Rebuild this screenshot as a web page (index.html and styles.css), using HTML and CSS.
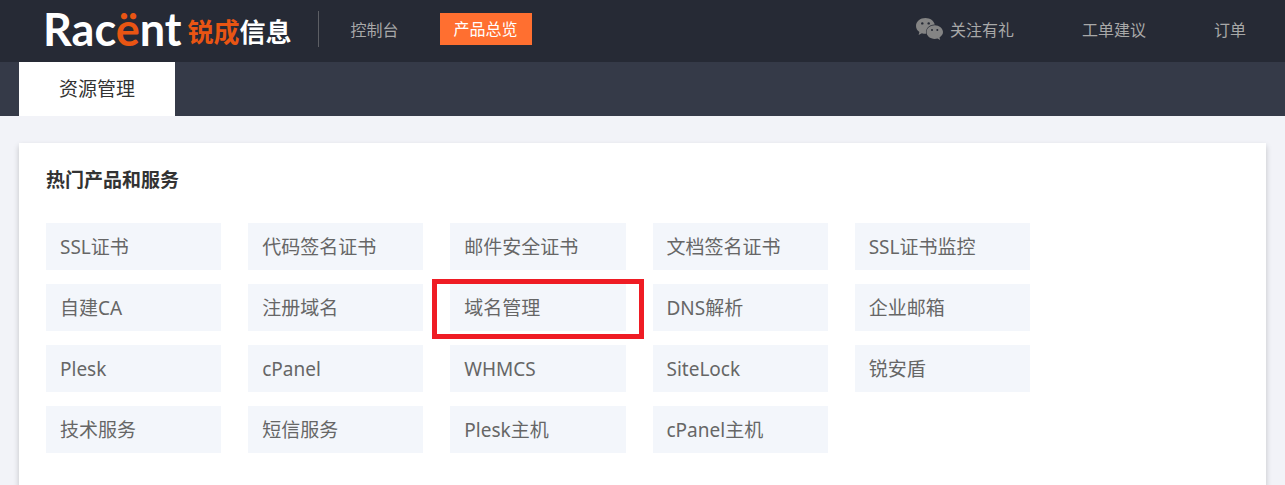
FILE: index.html
```html
<!DOCTYPE html>
<html lang="zh-CN">
<head>
    <meta charset="UTF-8">
    <meta name="viewport" content="width=device-width, initial-scale=1.0">
    <title>产品总览</title>
    <link rel="stylesheet" href="styles.css">
</head>
<body>
    <header class="header">
        <a class="logo" href="#">
            <span class="logo-name">Rac<span class="orange">ë</span>nt</span>
            <span class="logo-cn"><span class="orange">锐成</span>信息</span>
        </a>
        <nav class="nav">
            <a href="#">控制台</a>
            <a class="active" href="#">产品总览</a>
        </nav>
        <nav class="links">
            <a class="wechat" href="#">
                <svg width="27" height="22" viewBox="0 0 27 22" aria-hidden="true">
                    <path fill="#848484" d="M9.500 0C4.200 0 0 3.500 0 7.900c0 2.500 1.300 4.600 3.400 6.100L2.600 17l3.300-1.800c1.500.4 2.800.6 4.200.5C9.300 11 13 6.700 18.800 6.600 17.900 2.800 14.100 0 9.500 0z"/>
                    <path fill="#848484" d="M18.700 7.300c-4.600 0-8.200 3-8.200 6.800s3.600 6.900 8.200 6.900c1 0 1.900-.2 2.800-.5l2.700 1.500-.7-2.500c2-1.200 3.500-3.100 3.500-5.400 0-3.700-3.800-6.800-8.300-6.800z"/>
                    <g fill="#262a35">
                        <circle cx="6.300" cy="5.400" r="1.200"/>
                        <circle cx="12.700" cy="5.400" r="1.200"/>
                        <circle cx="16" cy="12" r="1"/>
                        <circle cx="21.300" cy="12" r="1"/>
                    </g>
                </svg>
                关注有礼
            </a>
            <a href="#">工单建议</a>
            <a href="#">订单</a>
        </nav>
    </header>
    <div class="tabs">
        <a class="tab" href="#">资源管理</a>
    </div>
    <main class="panel">
        <h2>热门产品和服务</h2>
        <div class="products">
            <a href="#">SSL证书</a>
            <a href="#">代码签名证书</a>
            <a href="#">邮件安全证书</a>
            <a href="#">文档签名证书</a>
            <a href="#">SSL证书监控</a>
            <a class="first" href="#">自建CA</a>
            <a href="#">注册域名</a>
            <a class="marked" href="#">域名管理</a>
            <a href="#">DNS解析</a>
            <a href="#">企业邮箱</a>
            <a class="first" href="#">Plesk</a>
            <a href="#">cPanel</a>
            <a href="#">WHMCS</a>
            <a href="#">SiteLock</a>
            <a href="#">锐安盾</a>
            <a class="first" href="#">技术服务</a>
            <a href="#">短信服务</a>
            <a href="#">Plesk主机</a>
            <a href="#">cPanel主机</a>
        </div>
    </main>
</body>
</html>
```

FILE: styles.css
```css
* {
    box-sizing: border-box;
}

body {
    margin: 0;
    min-height: 100vh;
    display: flex;
    flex-direction: column;
    font-family: "Noto Sans", "Noto Sans CJK SC", sans-serif;
    background-color: #f2f3f8;
}

a {
    color: inherit;
    text-decoration: none;
    white-space: nowrap;
}

.header {
    display: flex;
    align-items: center;
    height: 62px;
    padding: 0 39px 4px 43px;
    background-color: #262a35;
    color: #a8a8a8;
    font-size: 16px;
}

.logo {
    display: flex;
    align-items: flex-end;
    gap: 6px;
    height: 36px;
    padding-right: 26px;
    border-right: 1px solid #5c5e64;
    color: #fff;
    font-weight: bold;
}

.logo-name {
    font-family: Lato, sans-serif;
    font-size: 45px;
    line-height: 36px;
}

.logo-cn {
    font-size: 26px;
    line-height: 30px;
}

.orange {
    color: #e95513;
}

.nav {
    display: flex;
    align-items: center;
    gap: 41px;
    margin-left: 32px;
}

.nav .active {
    padding: 0 14px;
    line-height: 32px;
    background-color: #ff6f30;
    color: #fff;
}

.links {
    display: flex;
    align-items: center;
    gap: 68px;
    margin-left: auto;
}

.wechat {
    display: flex;
    align-items: center;
    gap: 7px;
}

.tabs {
    display: flex;
    padding-left: 19px;
    background-color: #353a48;
}

.tab {
    padding: 0 40px;
    line-height: 54px;
    background-color: #fff;
    color: #333;
    font-size: 19px;
}

.panel {
    flex: 1;
    margin: 27px 19px 0;
    padding: 23px 34px 33px 27px;
    background-color: #fff;
    box-shadow: 0 3px 6px rgba(0, 0, 0, 0.2);
}

h2 {
    margin: 0 0 29px;
    font-size: 19px;
    line-height: 28px;
    color: #333;
}

.products {
    display: grid;
    grid-template-columns: repeat(6, 1fr);
    gap: 14px 27px;
}

.products a {
    padding: 2px 0 0 14px;
    line-height: 45px;
    background-color: #f3f6fb;
    color: #666;
    font-size: 19px;
}

/* five products in a row, the sixth column stays empty */
.products .first {
    grid-column-start: 1;
}

.products .marked {
    position: relative;
}

.marked::after {
    content: "";
    position: absolute;
    top: -5px;
    right: -18px;
    bottom: -8px;
    left: -18px;
    border: 5px solid #ef1c24;
}
```
